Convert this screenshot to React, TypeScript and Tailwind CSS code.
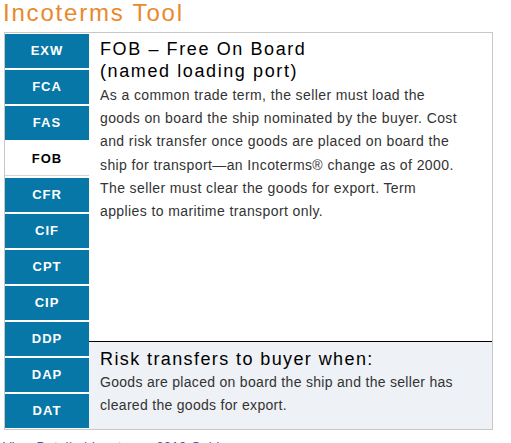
import React from "react";

const tabs = ["EXW", "FCA", "FAS", "FOB", "CFR", "CIF", "CPT", "CIP", "DDP", "DAP", "DAT"];

const bodyLines = [
  "As a common trade term, the seller must load the",
  "goods on board the ship nominated by the buyer. Cost",
  "and risk transfer once goods are placed on board the",
  "ship for transport—an Incoterms® change as of 2000.",
  "The seller must clear the goods for export. Term",
  "applies to maritime transport only.",
];

export default function App() {
  return (
    <div className="w-[511px] h-[443px] overflow-hidden bg-white" style={{ fontFamily: '"Liberation Sans", Arial, sans-serif' }}>
      <div className="pl-[3px] h-[32px] text-[24px] leading-[26px] text-[#e8892b] tracking-[1.8px]">Incoterms Tool</div>
      <div className="ml-[4px] w-[489px] h-[398px] border border-[#c8c8c8] flex">
        <div className="w-[84px] flex flex-col gap-[2px] pt-[1px]">
          {tabs.map((t) => (
            <div
              key={t}
              className={
                t === "FOB"
                  ? "h-[34px] bg-white text-black font-bold text-[13px] tracking-[1px] flex items-center justify-center border-b border-[#d4d4d4]"
                  : "h-[34px] bg-[#0777a8] text-white font-bold text-[13px] tracking-[1px] flex items-center justify-center"
              }
            >
              {t}
            </div>
          ))}
        </div>
        <div className="flex-1 flex flex-col">
          <div className="flex-1 pl-[11px] pr-[10px] pt-[5px]">
            <div className="text-[18px] leading-[22px] text-black tracking-[1.6px]">
              FOB – Free On Board
              <br />
              (named loading port)
            </div>
            <div className="mt-[2px] text-[14px] leading-[23.2px] text-[#333] tracking-[0.4px]">
              {bodyLines.map((l) => (
                <div key={l} className="whitespace-nowrap">{l}</div>
              ))}
            </div>
          </div>
          <div className="h-[88px] border-t border-black bg-[#eef1f6] pl-[11px] pt-[5px]">
            <div className="text-[18px] leading-[24px] text-black tracking-[1.4px]">Risk transfers to buyer when:</div>
            <div className="text-[14px] leading-[23.2px] text-[#333] tracking-[0.3px]">
              <div className="whitespace-nowrap">Goods are placed on board the ship and the seller has</div>
              <div className="whitespace-nowrap">cleared the goods for export.</div>
            </div>
          </div>
        </div>
      </div>
      <div className="pl-[3px] pt-[9px] text-[13px] leading-[16px] text-[#2a5db0] tracking-[0.4px]">View Detailed Incoterms 2010 Guide</div>
    </div>
  );
}
